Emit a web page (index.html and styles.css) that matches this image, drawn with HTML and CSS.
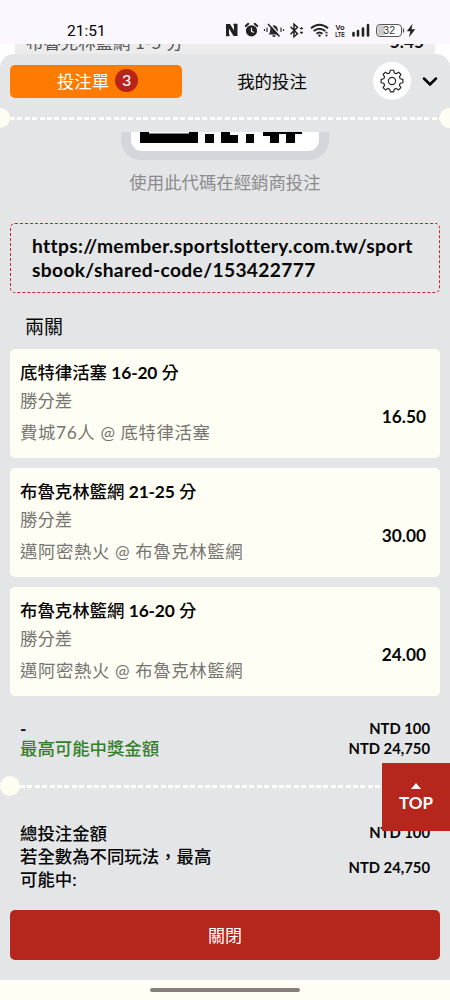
FILE: index.html
```html
<!DOCTYPE html>
<html lang="zh-Hant">
<head>
    <meta charset="UTF-8">
    <meta name="viewport" content="width=device-width, initial-scale=1.0">
    <title>投注單</title>
    <link rel="stylesheet" href="styles.css">
</head>
<body>
    <div class="status-bar">
        <span class="time">21:51</span>
        <svg class="status-icons" width="194" height="18" viewBox="0 0 194 18">
            <!-- nfc -->
            <path d="M3 4v10.200h2.500M12 14V3.800H9.500" fill="none" stroke="#222" stroke-width="2"/>
            <path d="M2 3h4l4 6.500V3h3.500v12H9.500L5 7.500V15H2z" fill="#222"/>
            <!-- alarm -->
            <circle cx="27.500" cy="9.800" r="5.600" fill="#222"/>
            <path d="M21.800 5l2.500-2.200M33.200 5l-2.500-2.200" stroke="#222" stroke-width="2" stroke-linecap="round"/>
            <path d="M27.500 6.800v3.400l2.300 1.300" stroke="#fff" stroke-width="1.200" fill="none"/>
            <!-- muted bell -->
            <path d="M44.500 13.500c1.500-1.300 1.500-3 1.700-5 .3-2.500 1.500-3.800 3.800-4.300 2.500.5 3.600 1.800 3.800 4.300.2 2 .2 3.700 1.700 5zM48.200 14.200h3.600a1.800 1.800 0 0 1-3.600 0z" fill="#2a2a2a"/>
            <path d="M45.500 2.500l11 12" stroke="#fbf7fe" stroke-width="1.300"/>
            <path d="M44 3l11.500 12.500" stroke="#222" stroke-width="1.500"/>
            <path d="M40.500 8v2M43 6.500v4.500M57 6.500v4.500M59.500 8v2" stroke="#333" stroke-width="1.200"/>
            <!-- bluetooth -->
            <path d="M66.500 5.700l7 7-3.500 3v-12.500l3.500 3-7 7" stroke="#222" stroke-width="1.500" fill="none"/>
            <path d="M76 8l1.500-2L79 8zM76 11l1.500 2 1.500-2z" fill="#222" stroke="#222" stroke-width=".5"/>
            <!-- wifi -->
            <path d="M87 7.300q8.500-7 17 0M89.700 10.100q5.800-4.800 11.600 0M92.500 12.800q3-2.600 6 0" stroke="#222" stroke-width="1.900" fill="none"/>
            <circle cx="95.500" cy="14.600" r="1.200" fill="#222"/>
            <path d="M101 12.300l1.500-2 1.500 2zM101 13.700l1.500 2 1.500-2z" fill="#222"/>
            <text class="volte" x="111.500" y="8.500">Vo</text>
            <text class="volte" x="111.300" y="15.500" textLength="9.500" lengthAdjust="spacingAndGlyphs">LTE</text>
            <!-- signal -->
            <path d="M129.500 14.500v-2.500M134 14.500V10M139 14.500V7.500M144 14.500V4" stroke="#222" stroke-width="2.600" stroke-linecap="round"/>
            <!-- battery -->
            <rect x="152.500" y="3.500" width="25" height="12" rx="3.500" fill="#fff" stroke="#555"/>
            <path d="M156 4.500h4.500v10H156a2.500 2.500 0 0 1-2.500-2.500V7A2.500 2.500 0 0 1 156 4.500z" fill="#cbc8ce"/>
            <path d="M179.500 7.500v4" stroke="#555" stroke-width="1.300"/>
            <text class="percent" x="159.300" y="13.300">32</text>
            <path d="M188.500 2.700l-5.700 7.500h3.500l-1.300 6 6.300-8h-3.800z" fill="#222"/>
        </svg>
    </div>
    <div class="behind">
        <div class="behind-row">
            <span>布魯克林籃網 1-5 分</span>
            <b>5.45</b>
        </div>
    </div>
    <div class="slip">
        <div class="tabs">
            <div class="tab active">投注單<span class="count">3</span></div>
            <div class="tab">我的投注</div>
            <div class="settings">
                <svg width="24" height="24" viewBox="0 0 24 24" fill="none" stroke="#222" stroke-width="1.150" stroke-linejoin="round">
                    <path d="M10.300 1.200h3.400l.6 2.700 1.900.8 2.400-1.500 2.300 2.300-1.500 2.400.8 1.900 2.700.6v3.300l-2.700.6-.8 1.900 1.500 2.400-2.300 2.300-2.400-1.500-1.900.8-.6 2.700h-3.400l-.6-2.700-1.900-.8-2.400 1.500-2.300-2.300 1.500-2.400-.8-1.900-2.700-.6v-3.300l2.700-.6.8-1.900-1.500-2.400 2.300-2.300 2.400 1.500 1.900-.8z"/>
                    <circle cx="12" cy="12" r="3.600"/>
                </svg>
            </div>
            <svg class="chevron" width="18" height="12" viewBox="0 0 18 12">
                <path d="M3 2.500l6 6 6-6" fill="none" stroke="#000" stroke-width="2.500" stroke-linecap="round"/>
            </svg>
        </div>
        <div class="divider edge"></div>
        <div class="content">
            <div class="qr">
                <svg width="188" height="19" viewBox="0 0 188 19">
                    <path d="M9 0h9v1.500h40V0h9v11H9zM74 2h9v9h-9zM90 0h9v3h8v8H90zM115 2h8v9h-8zM132 0h39v2h-7v9h-9V2h-7v9h-9V4h-7z"/>
                </svg>
            </div>
            <p class="hint">使用此代碼在經銷商投注</p>
            <div class="link">https://member.sportslottery.com.tw/sportsbook/shared-code/153422777</div>
            <h2 class="heading">兩關</h2>
            <div class="bets">
                <div class="bet">
                    <div>
                        <p class="pick">底特律活塞 <b>16-20</b> 分</p>
                        <p class="market">勝分差</p>
                        <p class="match">費城76人 @ 底特律活塞</p>
                    </div>
                    <span class="odds">16.50</span>
                </div>
                <div class="bet">
                    <div>
                        <p class="pick">布魯克林籃網 <b>21-25</b> 分</p>
                        <p class="market">勝分差</p>
                        <p class="match">邁阿密熱火 @ 布魯克林籃網</p>
                    </div>
                    <span class="odds">30.00</span>
                </div>
                <div class="bet">
                    <div>
                        <p class="pick">布魯克林籃網 <b>16-20</b> 分</p>
                        <p class="market">勝分差</p>
                        <p class="match">邁阿密熱火 @ 布魯克林籃網</p>
                    </div>
                    <span class="odds">24.00</span>
                </div>
            </div>
            <div class="sum">
                <div class="row"><b>-</b><span class="amount">NTD 100</span></div>
                <div class="row win"><span>最高可能中獎金額</span><span class="amount">NTD 24,750</span></div>
            </div>
            <div class="divider"></div>
            <div class="total">
                <div class="row"><span>總投注金額</span><span class="amount">NTD 100</span></div>
                <div class="row"><span class="label">若全數為不同玩法，最高可能中:</span><span class="amount">NTD 24,750</span></div>
            </div>
            <button class="close">關閉</button>
        </div>
    </div>
    <div class="nav-bar"><div class="handle"></div></div>
    <a class="to-top">
        <svg width="10" height="6" viewBox="0 0 10 6"><path d="M0 6l5-6 5 6z" fill="#fff"/></svg>
        TOP
    </a>
</body>
</html>
```
FILE: styles.css
```css
* {
    padding: 0;
    margin: 0;
    box-sizing: border-box;
}

body {
    height: 1000px;
    display: flex;
    flex-direction: column;
    background-color: #fffdf4;
    font-family: Lato, "Noto Sans CJK TC", sans-serif;
    font-size: 17.4px;
    font-variant-ligatures: none;
    color: #050505;
    overflow: hidden;
}

.status-bar {
    height: 44px;
    flex-shrink: 0;
    padding: 17px 32px 0 67px;
    display: flex;
    justify-content: space-between;
    align-items: flex-start;
    background-color: #fbf7fe;
}

.time {
    font-family: Roboto, sans-serif;
    font-size: 15.500px;
    line-height: 28px;
    color: #000;
}

.status-icons {
    margin-top: 4px;
}

.volte {
    font: bold 7.500px "Liberation Sans", sans-serif;
    fill: #222;
}

.percent {
    font: 10.500px "Liberation Sans", sans-serif;
    fill: #333;
}

.behind {
    height: 24px;
    flex-shrink: 0;
    padding: 0 15px;
    margin-bottom: -14px;
    background-color: #fff;
}

.behind-row {
    height: 24px;
    padding: 0 11px;
    display: flex;
    justify-content: space-between;
    background-color: #ececed;
    overflow: hidden;
    color: #555;
}

.behind-row span {
    line-height: 24px;
    margin-top: -13px;
}

.behind-row b {
    line-height: 24px;
    margin-top: -14px;
    font-size: 17.300px;
    color: #111;
}

.slip {
    height: 926px;
    flex-shrink: 0;
    position: relative;
    background-color: #e4e5e7;
    border-radius: 14px 14px 0 0;
}

.tabs {
    height: 54px;
    padding: 0 10px;
    display: flex;
    align-items: center;
}

.tab {
    width: 180px;
    height: 33px;
    padding-bottom: 2px;
    display: flex;
    justify-content: center;
    align-items: center;
    gap: 6px;
}

.tab.active {
    width: 172px;
    padding: 0 0 1px 3px;
    background-color: #ff7a00;
    border-radius: 5px;
    color: #fff;
}

.count {
    width: 23px;
    height: 23px;
    border-radius: 50%;
    background-color: #b9231a;
    font-size: 16px;
    font-weight: 500;
    line-height: 22px;
    text-align: center;
}

.settings {
    width: 38px;
    height: 38px;
    margin-left: 11px;
    border-radius: 50%;
    background-color: #fff;
    display: flex;
    justify-content: center;
    align-items: center;
}

.chevron {
    margin: 2px 0 0 10px;
}

.divider {
    height: 20px;
    display: flex;
    align-items: center;
}

.divider::before {
    content: "";
    width: 20px;
    height: 20px;
    border-radius: 50%;
    background-color: #fffdf2;
}

.divider::after {
    content: "";
    flex: 1;
    height: 3px;
    background: repeating-linear-gradient(90deg, #fffdf8 0 5px, transparent 5px 7.400px);
}

.divider.edge {
    overflow: hidden;
    background: radial-gradient(circle at 450px 10px, #fffdf2 10px, transparent 10.500px);
}

.divider.edge::before {
    margin-left: -10px;
}

.divider.edge::after {
    margin-right: 10px;
}

.content {
    padding-top: 4px;
}

.qr {
    width: 208px;
    height: 28px;
    margin: 0 auto;
    padding: 0 10px;
    background-color: #d5d6dc;
    border-radius: 0 0 20px 20px;
}

.qr svg {
    display: block;
    background-color: #fff;
    border-radius: 0 0 11px 11px;
}

.hint {
    height: 44px;
    line-height: 46px;
    text-align: center;
    color: #8b8b8d;
}

.link {
    height: 70px;
    margin: 19px 10px 0;
    padding: 10px 20px 0 21px;
    border: 1px dashed #c02633;
    border-radius: 5px;
    font-size: 19.200px;
    font-weight: bold;
    line-height: 24px;
    letter-spacing: 0.35px;
    word-break: break-all;
}

.heading {
    height: 56px;
    padding: 6px 0 0 25px;
    font-size: 19px;
    font-weight: normal;
    line-height: 56px;
}

.bets {
    padding: 0 10px;
    display: flex;
    flex-direction: column;
    gap: 10px;
}

.bet {
    height: 109px;
    padding: 10px 14px 0 10px;
    display: flex;
    justify-content: space-between;
    background-color: #fffef4;
    border-radius: 5px;
}

.pick {
    line-height: 28px;
    font-weight: 500;
}

.pick b {
    letter-spacing: -0.2px;
}

.market {
    line-height: 28px;
    color: #777572;
}

.match {
    line-height: 36px;
    letter-spacing: 0.6px;
    color: #777572;
}

.odds {
    line-height: 28px;
    margin-top: 44px;
    font-size: 17.300px;
    font-weight: bold;
}

.sum {
    height: 80px;
    padding: 23px 20px 0;
}

.sum .row {
    height: 20px;
    line-height: 20px;
}

.row {
    display: flex;
    justify-content: space-between;
    align-items: center;
    font-weight: 500;
}

.win > :first-child {
    color: #33802b;
}

.amount {
    padding-bottom: 1px;
    font-size: 14.800px;
    font-weight: bold;
}

.sum .amount {
    padding-bottom: 3px;
}

.total {
    height: 115px;
    padding: 25px 20px 0;
    line-height: 23px;
}

.label {
    width: 200px;
}

.close {
    display: block;
    width: 430px;
    height: 50px;
    margin: -1px 10px 0;
    padding-bottom: 2px;
    border: none;
    border-radius: 5px;
    background-color: #b5261c;
    color: #fff;
    font-family: inherit;
    font-size: 17px;
}

.nav-bar {
    height: 20px;
    display: flex;
    justify-content: center;
    align-items: center;
}

.handle {
    width: 150px;
    height: 4px;
    margin-bottom: 1px;
    border-radius: 2px;
    background-color: #85807a;
}

.to-top {
    position: fixed;
    right: 0;
    top: 763px;
    width: 68px;
    height: 68px;
    padding-top: 20px;
    display: flex;
    flex-direction: column;
    align-items: center;
    background-color: #b5261c;
    color: #fff;
    font-size: 17px;
    font-weight: bold;
    line-height: 28px;
}
```
